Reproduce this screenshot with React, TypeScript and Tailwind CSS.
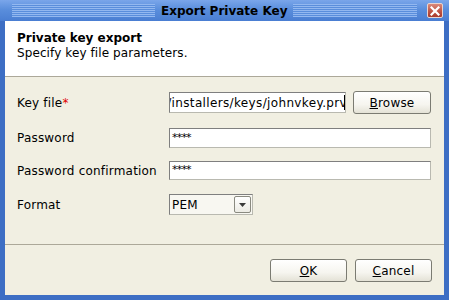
import React from "react";

const font = { fontFamily: '"DejaVu Sans", Verdana, sans-serif' };

function Stripes({ className }: { className: string }) {
  return (
    <div
      className={
        "h-[13px] bg-[repeating-linear-gradient(to_bottom,#93b8f0_0px,#93b8f0_1px,#5a8edc_1px,#5a8edc_2px)] " +
        className
      }
    />
  );
}

function XpButton({ children, className = "" }: { children: React.ReactNode; className?: string }) {
  return (
    <div
      className={
        "flex h-[23px] items-center justify-center rounded-[3px] border border-[#7b7b72] bg-[linear-gradient(to_bottom,#ffffff_0%,#f6f5ef_60%,#e4e2d6_100%)] text-[12px] tracking-[0.2px] text-black " +
        className
      }
    >
      {children}
    </div>
  );
}

function TextBox({ children, className = "" }: { children: React.ReactNode; className?: string }) {
  return (
    <div
      className={
        "flex items-center overflow-hidden border border-[#7f7f7f] border-b-[#b9b9b0] border-r-[#b9b9b0] bg-white text-[12px] text-black " +
        className
      }
    >
      {children}
    </div>
  );
}

export default function App() {
  return (
    <div
      className="flex h-[300px] w-[449px] flex-col bg-[#3d6ec4] px-[5px] pb-[5px]"
      style={font}
    >
      {/* title bar */}
      <div className="relative -mx-[5px] flex h-[21px] items-center bg-[linear-gradient(to_bottom,#7aa6ea_0%,#5a8edc_45%,#4a7ed2_100%)]">
        <Stripes className="ml-[12px] w-[143px]" />
        <div className="px-[6px] text-[12px] font-bold leading-none text-black">
          Export Private Key
        </div>
        <Stripes className="w-[124px]" />
        <div className="ml-auto mr-[6px] flex h-[15px] w-[16px] items-center justify-center rounded-[2px] border border-[#e8d4d0] bg-[linear-gradient(to_bottom,#d98a7c_0%,#bf5545_55%,#a83a2c_100%)]">
          <svg width="10" height="10" viewBox="0 0 10 10">
            <path d="M1.5 1.5 L8.5 8.5 M8.5 1.5 L1.5 8.5" stroke="#fff" strokeWidth="2.2" strokeLinecap="square" />
          </svg>
        </div>
      </div>

      {/* header */}
      <div className="flex h-[56px] flex-col border-b border-[#aca899] bg-white pl-[12px] pt-[10px]">
        <div className="text-[12px] font-bold leading-[15px] text-black">Private key export</div>
        <div className="text-[12px] leading-[15px] tracking-[0.1px] text-black">Specify key file parameters.</div>
      </div>

      {/* body */}
      <div className="flex flex-1 flex-col bg-[#f1efe2] text-[12px] tracking-[0.2px]">
        <div className="flex flex-col pl-[12px] pr-[13px]">
          <div className="mt-[14px] flex h-[23px] items-center">
            <div className="w-[152px] text-black">
              Key file<span className="text-[#e00000]">*</span>
            </div>
            <TextBox className="h-[21px] w-[177px] justify-end">
              <span className="whitespace-nowrap tracking-[0.35px]">s/installers/keys/johnvkey.prv</span>
              <span className="ml-[-3px] h-[15px] w-[1px] shrink-0 bg-black" />
            </TextBox>
            <XpButton className="ml-auto w-[78px]">
              <span className="underline">B</span>rowse
            </XpButton>
          </div>

          <div className="mt-[14px] flex h-[20px] items-center">
            <div className="w-[152px] text-black">Password</div>
            <TextBox className="h-[20px] flex-1 pl-[2px]">
              <span className="text-[11px] tracking-[-0.8px]">****</span>
            </TextBox>
          </div>

          <div className="mt-[13px] flex h-[19px] items-center">
            <div className="w-[152px] text-black">Password confirmation</div>
            <TextBox className="h-[19px] flex-1 pl-[2px]">
              <span className="text-[11px] tracking-[-0.8px]">****</span>
            </TextBox>
          </div>

          <div className="mt-[14px] flex h-[21px] items-center">
            <div className="w-[152px] text-black">Format</div>
            <div className="flex h-[21px] w-[84px] items-center border border-[#7f7f7f] border-b-[#b9b9b0] border-r-[#b9b9b0] bg-[#f8f7f1] pl-[2px]">
              <span className="flex-1 text-black">PEM</span>
              <div className="mr-[1px] flex h-[17px] w-[17px] items-center justify-center rounded-[2px] border border-[#8a8a80] bg-[linear-gradient(to_bottom,#ffffff_0%,#ecebe4_100%)]">
                <svg width="7" height="4" viewBox="0 0 7 4">
                  <path d="M0 0 H7 L3.5 4 Z" fill="#3a3a3a" />
                </svg>
              </div>
            </div>
          </div>
        </div>

        <div className="mt-[29px] border-t border-[#aca899]" />

        <div className="mt-[14px] flex justify-end gap-[8px] pr-[12px]">
          <XpButton className="w-[77px]">
            <span className="underline">O</span>K
          </XpButton>
          <XpButton className="w-[77px]">
            <span className="underline">C</span>ancel
          </XpButton>
        </div>
      </div>
    </div>
  );
}
